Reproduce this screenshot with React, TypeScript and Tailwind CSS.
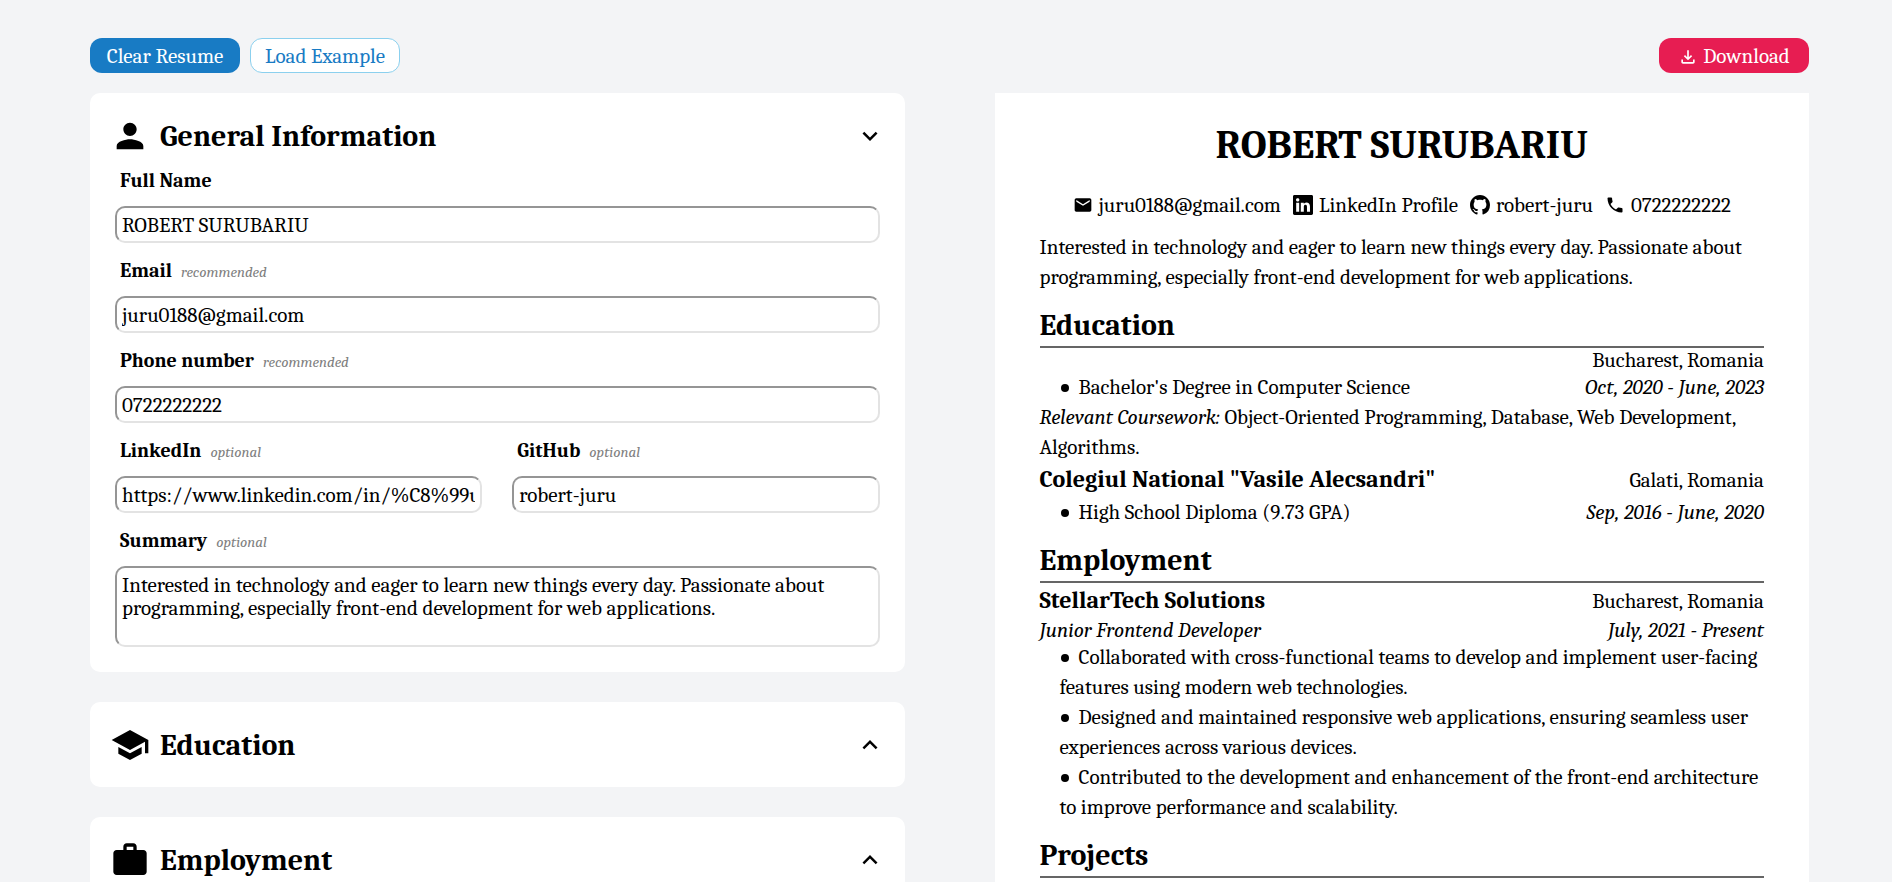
import { useState, type ReactNode } from "react";
import {
  MdEmail,
  MdExpandLess,
  MdExpandMore,
  MdOutlineFileDownload,
  MdPerson,
  MdPhone,
  MdSchool,
  MdWork,
} from "react-icons/md";
import { BsGithub, BsLinkedin } from "react-icons/bs";

const CONTROL =
  "block w-full rounded-[10px] border-2 border-t-[#959595] border-l-[#959595] border-r-[#e3e3e3] border-b-[#e3e3e3] bg-white px-[5px] text-[21px] leading-[23px] outline-none";

function Label({ id, text, hint }: { id: string; text: string; hint?: string }) {
  return (
    <label htmlFor={id} className="block pt-2 pb-[10px] pl-[5px] text-xl leading-[30px] font-bold">
      {text}
      {hint && (
        <span className="ml-[9px] text-[15px] leading-5 font-normal text-[#808080] italic">{hint}</span>
      )}
    </label>
  );
}

function Field({ id, text, hint, value }: { id: string; text: string; hint?: string; value: string }) {
  return (
    <div className="min-w-0 pb-[5px]">
      <Label id={id} text={text} hint={hint} />
      <input id={id} type="text" defaultValue={value} className={`${CONTROL} h-[37px]`} />
    </div>
  );
}

function Card({
  icon,
  title,
  initiallyOpen = false,
  children,
}: {
  icon: ReactNode;
  title: string;
  initiallyOpen?: boolean;
  children?: ReactNode;
}) {
  const [open, setOpen] = useState(initiallyOpen);
  return (
    <section className="rounded-[10px] bg-white p-5">
      <button
        type="button"
        aria-expanded={open}
        onClick={() => setOpen(!open)}
        className="flex w-full items-center justify-between"
      >
        <span className="flex items-center gap-[10px]">
          {icon}
          <span className="pt-[3px] text-[30px] leading-[42px] font-bold">{title}</span>
        </span>
        {open ? <MdExpandMore size={30} /> : <MdExpandLess size={30} />}
      </button>
      {open && children && <div className="px-[5px]">{children}</div>}
    </section>
  );
}

function Heading({ children }: { children: ReactNode }) {
  return (
    <h2 className="mt-[14px] border-b-2 border-[#656565] text-[30px] leading-10 font-bold">{children}</h2>
  );
}

function Bullets({ items }: { items: string[] }) {
  return (
    <ul className="pl-5">
      {items.map((item) => (
        <li
          key={item}
          className="before:mr-[10px] before:mb-[3px] before:ml-px before:inline-block before:size-2 before:rounded-full before:bg-black before:align-middle before:content-['']"
        >
          {item}
        </li>
      ))}
    </ul>
  );
}

function Organisation({ name, place }: { name: string; place: string }) {
  return (
    <div className="flex items-baseline justify-between leading-[34px]">
      <h3 className="text-2xl leading-[34px] font-bold">{name}</h3>
      <span>{place}</span>
    </div>
  );
}

export default function App() {
  return (
    <div className="min-h-screen bg-gray-100 pt-[38px] pr-[83px] pb-10 pl-[90px] font-[Cambria,Caladea,'DejaVu_Serif_Condensed',serif] text-black">
      <header className="mb-5 flex items-center justify-between text-[21px] leading-[23px]">
        <div className="flex gap-[10px]">
          <button type="button" className="h-[35px] w-[150px] rounded-xl bg-[#187bc4] pt-[2px] text-white">
            Clear Resume
          </button>
          <button
            type="button"
            className="h-[35px] w-[150px] rounded-xl border border-[#8bd0ee] bg-white pt-[2px] text-[#187bc4]"
          >
            Load Example
          </button>
        </div>
        <button
          type="button"
          className="flex h-[35px] w-[150px] items-center justify-center gap-[5px] rounded-xl bg-[#e71d52] pt-[2px] text-white"
        >
          <MdOutlineFileDownload size={20} />
          Download
        </button>
      </header>

      <main className="grid grid-cols-2 gap-[90px]">
        <form className="flex min-w-0 flex-col gap-[30px]">
          <Card icon={<MdPerson size={40} />} title="General Information" initiallyOpen>
            <Field id="name" text="Full Name" value="ROBERT SURUBARIU" />
            <Field id="email" text="Email" hint="recommended" value="juru0188@gmail.com" />
            <Field id="phone" text="Phone number" hint="recommended" value="0722222222" />
            <div className="grid grid-cols-2 gap-[30px]">
              <Field
                id="linkedin"
                text="LinkedIn"
                hint="optional"
                value="https://www.linkedin.com/in/%C8%99u"
              />
              <Field id="github" text="GitHub" hint="optional" value="robert-juru" />
            </div>
            <div className="pb-[5px]">
              <Label id="summary" text="Summary" hint="optional" />
              <textarea
                id="summary"
                className={`${CONTROL} h-[81px] resize-none py-[6px]`}
                defaultValue="Interested in technology and eager to learn new things every day. Passionate about programming, especially front-end development for web applications."
              />
            </div>
          </Card>
          <Card icon={<MdSchool size={40} />} title="Education" />
          <Card icon={<MdWork size={40} />} title="Employment" />
        </form>

        <article className="min-w-0 bg-white px-[45px] pt-[22px] pb-10 text-[21px] leading-[30px]">
          <h1 className="mb-[15px] text-center text-[40px] leading-[60px] font-bold">ROBERT SURUBARIU</h1>
          <address className="mb-3 flex justify-center gap-3 not-italic">
            <span className="flex items-center gap-[6px]">
              <MdEmail size={20} />
              juru0188@gmail.com
            </span>
            <a href="#linkedin" className="flex items-center gap-[6px]">
              <BsLinkedin size={20} />
              LinkedIn Profile
            </a>
            <a href="#github" className="flex items-center gap-[6px]">
              <BsGithub size={20} />
              robert-juru
            </a>
            <span className="flex items-center gap-[6px]">
              <MdPhone size={20} />
              0722222222
            </span>
          </address>
          <p>
            Interested in technology and eager to learn new things every day. Passionate about programming,
            especially front-end development for web applications.
          </p>

          <section>
            <Heading>Education</Heading>
            <p className="text-right leading-6">Bucharest, Romania</p>
            <div className="flex justify-between">
              <Bullets items={["Bachelor's Degree in Computer Science"]} />
              <em>Oct, 2020 - June, 2023</em>
            </div>
            <p>
              <em>Relevant Coursework:</em> Object-Oriented Programming, Database, Web Development, Algorithms.
            </p>
            <Organisation name={'Colegiul National "Vasile Alecsandri"'} place="Galati, Romania" />
            <div className="flex justify-between">
              <Bullets items={["High School Diploma (9.73 GPA)"]} />
              <em>Sep, 2016 - June, 2020</em>
            </div>
          </section>

          <section>
            <Heading>Employment</Heading>
            <Organisation name="StellarTech Solutions" place="Bucharest, Romania" />
            <div className="flex justify-between leading-6">
              <em>Junior Frontend Developer</em>
              <em>July, 2021 - Present</em>
            </div>
            <Bullets
              items={[
                "Collaborated with cross-functional teams to develop and implement user-facing features using modern web technologies.",
                "Designed and maintained responsive web applications, ensuring seamless user experiences across various devices.",
                "Contributed to the development and enhancement of the front-end architecture to improve performance and scalability.",
              ]}
            />
          </section>

          <section>
            <Heading>Projects</Heading>
          </section>
        </article>
      </main>
    </div>
  );
}
